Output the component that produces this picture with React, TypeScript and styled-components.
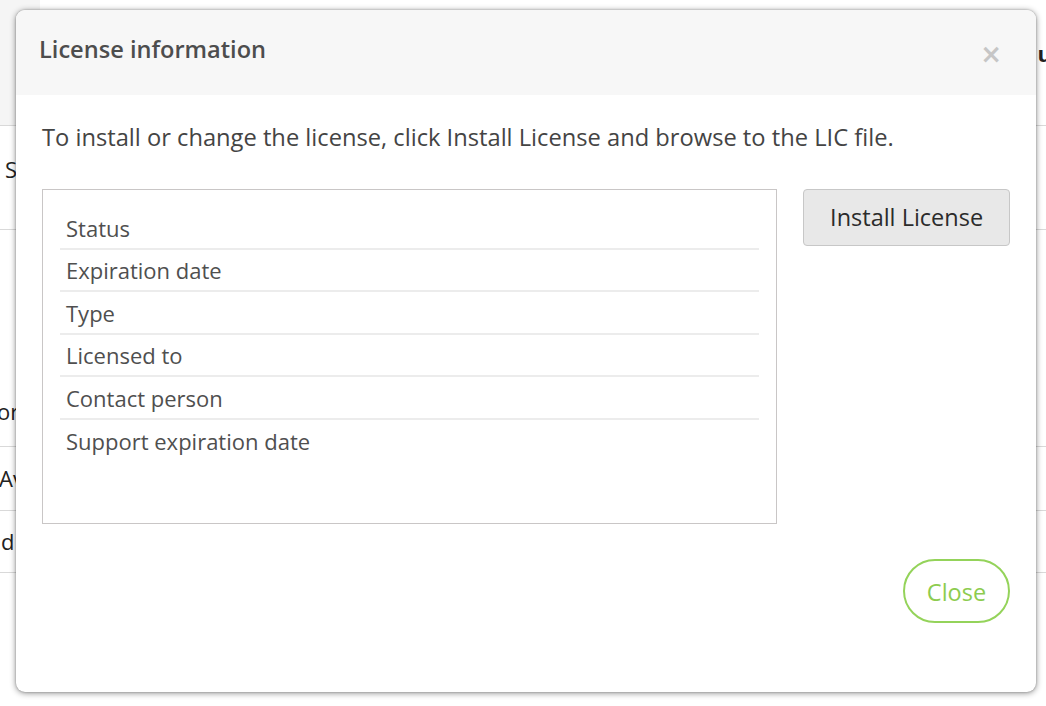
import React from "react";
import styled, { createGlobalStyle } from "styled-components";

const Global = createGlobalStyle`
  html, body { margin: 0; padding: 0; }
  body {
    width: 1046px;
    height: 706px;
    overflow: hidden;
    background: #fff;
    font-family: "Open Sans", "Noto Sans", sans-serif;
  }
  #root { position: relative; width: 1046px; height: 706px; }
`;

/* ---------- background page (a table partly hidden by the dialog) ---------- */
const Page = styled.div`
  display: grid;
  grid-template-columns: 40px 1fr 40px;
  grid-template-rows: 126px 104px 217px 64px 62px 1fr;
  width: 1046px;
  height: 706px;
  font-family: "Open Sans", sans-serif;
  font-size: 22px;
  color: #222;
`;

const Cell = styled.div<{ $gray?: boolean; $bold?: boolean; $last?: boolean; $right?: boolean; $align?: string }>`
  display: flex;
  align-items: ${(p) => p.$align || "center"};
  justify-content: ${(p) => (p.$right ? "flex-end" : "flex-start")};
  border-bottom: ${(p) => (p.$last ? "none" : "1px solid #d9d9d9")};
  background: ${(p) => (p.$gray ? "#f5f5f5" : "#fff")};
  font-weight: ${(p) => (p.$bold ? 700 : 400)};
  overflow: hidden;
  white-space: nowrap;
`;

const RightText = styled.span`
  margin-right: -6px;
  padding-bottom: 20px;
`;

const LeftText = styled.span<{ $pad?: number; $shift?: number }>`
  padding-bottom: ${(p) => p.$pad || 0}px;
  margin-left: ${(p) => p.$shift || 0}px;
`;

/* ---------- dialog ---------- */
const Dialog = styled.div`
  position: absolute;
  left: 16px;
  top: 10px;
  width: 1020px;
  height: 682px;
  background: #fff;
  border-radius: 9px;
  box-shadow: 0 1px 6px rgba(0, 0, 0, 0.45), 0 0 2px rgba(0, 0, 0, 0.3);
  display: flex;
  flex-direction: column;
  overflow: hidden;
`;

const Header = styled.div`
  height: 85px;
  flex: none;
  background: #f7f7f7;
  display: flex;
  align-items: center;
  justify-content: space-between;
  padding: 0 34px 0 23px;
  box-sizing: border-box;
`;

const Title = styled.h2`
  margin: 0;
  font-size: 23.6px;
  font-weight: 600;
  color: #4d4d4d;
  padding-bottom: 8px;
`;

const CloseX = styled.span`
  font-size: 26px;
  font-weight: 700;
  color: #c6c6c6;
  line-height: 1;
  padding-top: 2px;
  font-family: "DejaVu Sans", sans-serif;
`;

const Body = styled.div`
  flex: 1;
  padding: 26px 26px 0 26px;
  display: flex;
  flex-direction: column;
`;

const Intro = styled.p`
  margin: 0;
  font-size: 23.7px;
  line-height: 32px;
  color: #444;
`;

const Content = styled.div`
  display: flex;
  align-items: flex-start;
  gap: 26px;
  margin-top: 36px;
`;

const InfoBox = styled.div`
  width: 736px;
  height: 335px;
  box-sizing: border-box;
  border: 1px solid #c9c6c6;
  padding: 17px 17px 0 17px;
`;

const Row = styled.div<{ $last?: boolean }>`
  height: 42.5px;
  box-sizing: border-box;
  display: flex;
  align-items: center;
  padding: 1px 0 0 6px;
  font-size: 22px;
  color: #4f4f4f;
  border-bottom: ${(p) => (p.$last ? "none" : "2px solid #ececec")};
`;

const InstallButton = styled.button`
  width: 207px;
  height: 57px;
  background: #e8e8e8;
  border: 1px solid #c7c7c7;
  border-radius: 4px;
  font-family: "Open Sans", sans-serif;
  font-size: 23.5px;
  color: #2b2b2b;
  cursor: pointer;
  padding: 0 0 2px 0;
`;

const Footer = styled.div`
  display: flex;
  justify-content: flex-end;
  margin-top: 35px;
`;

const CloseButton = styled.button`
  width: 107px;
  height: 64px;
  border: 2px solid #94d35a;
  border-radius: 32px;
  background: #fff;
  color: #8dcc4f;
  font-family: "Open Sans", sans-serif;
  font-size: 23.5px;
  padding: 1px 0 0 0;
  cursor: pointer;
`;

const rows = [
  "Status",
  "Expiration date",
  "Type",
  "Licensed to",
  "Contact person",
  "Support expiration date",
];

export default function App() {
  return (
    <>
      <Global />
      <Page>
        <Cell $gray />
        <Cell />
        <Cell $right $bold><RightText>u</RightText></Cell>
        <Cell><LeftText $pad={18} $shift={5}>S</LeftText></Cell>
        <Cell />
        <Cell />
        <Cell $align="flex-end"><LeftText $pad={20} $shift={-3}>or</LeftText></Cell>
        <Cell />
        <Cell />
        <Cell><LeftText $pad={2} $shift={-1}>Av</LeftText></Cell>
        <Cell />
        <Cell />
        <Cell><LeftText $pad={2} $shift={1}>d</LeftText></Cell>
        <Cell />
        <Cell />
        <Cell $last />
        <Cell $last />
        <Cell $last />
      </Page>
      <Dialog role="dialog" aria-label="License information">
        <Header>
          <Title>License information</Title>
          <CloseX>×</CloseX>
        </Header>
        <Body>
          <Intro>
            To install or change the license, click Install License and browse to the LIC file.
          </Intro>
          <Content>
            <InfoBox>
              {rows.map((r, i) => (
                <Row key={r} $last={i === rows.length - 1}>
                  {r}
                </Row>
              ))}
            </InfoBox>
            <InstallButton>Install License</InstallButton>
          </Content>
          <Footer>
            <CloseButton>Close</CloseButton>
          </Footer>
        </Body>
      </Dialog>
    </>
  );
}
